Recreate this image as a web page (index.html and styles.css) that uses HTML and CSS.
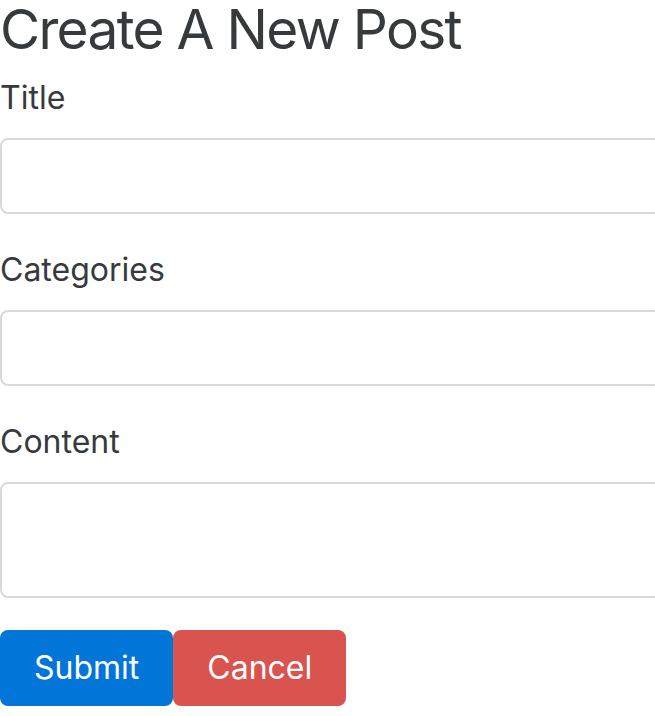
FILE: index.html
```html
<!DOCTYPE html>
<html>
<head>
<meta charset="utf-8">
<link rel="stylesheet" href="styles.css">
</head>
<body>
<div class="page">
  <h3 class="heading">Create A New Post</h3>
  <form class="post-form">
    <div class="form-group">
      <label class="form-label">Title</label>
      <input class="form-control" type="text">
    </div>
    <div class="form-group">
      <label class="form-label">Categories</label>
      <input class="form-control" type="text">
    </div>
    <div class="form-group">
      <label class="form-label">Content</label>
      <textarea class="form-control textarea"></textarea>
    </div>
    <div class="actions">
      <button type="button" class="btn btn-primary">Submit</button>
      <button type="button" class="btn btn-danger">Cancel</button>
    </div>
  </form>
</div>
</body>
</html>
```

FILE: styles.css
```css
html, body {
  margin: 0;
  padding: 0;
  background: #fff;
  overflow: hidden;
}
.page {
  width: 655px;
  font-family: Inter, "Liberation Sans", Arial, sans-serif;
  color: #373a3c;
}
.heading {
  width: fit-content;
  margin: 0 0 16px 0;
  font-size: 55px;
  font-weight: 400;
  line-height: 58px;
  letter-spacing: -1.7px;
}
.post-form {
  margin: 0;
}
.form-group {
  margin-bottom: 32px;
}
.form-label {
  display: block;
  width: fit-content;
  font-size: 32px;
  line-height: 48px;
  margin-bottom: 16px;
}
.form-control {
  display: block;
  box-sizing: border-box;
  width: 720px;
  height: 76px;
  margin: 0;
  padding: 16px 24px;
  font: inherit;
  font-size: 32px;
  border: 2px solid #d9d9d9;
  border-radius: 8px;
  background: #fff;
}
.textarea {
  height: 116px;
  resize: none;
}
.actions {
  display: flex;
}
.btn {
  box-sizing: border-box;
  height: 76px;
  padding: 0 32px;
  font-family: inherit;
  font-size: 32px;
  line-height: 40px;
  color: #fff;
  border: 2px solid transparent;
  border-radius: 8px;
}
.btn-primary {
  background: #0275d8;
  border-color: #0275d8;
}
.btn-danger {
  background: #d9534f;
  border-color: #d9534f;
}
```
